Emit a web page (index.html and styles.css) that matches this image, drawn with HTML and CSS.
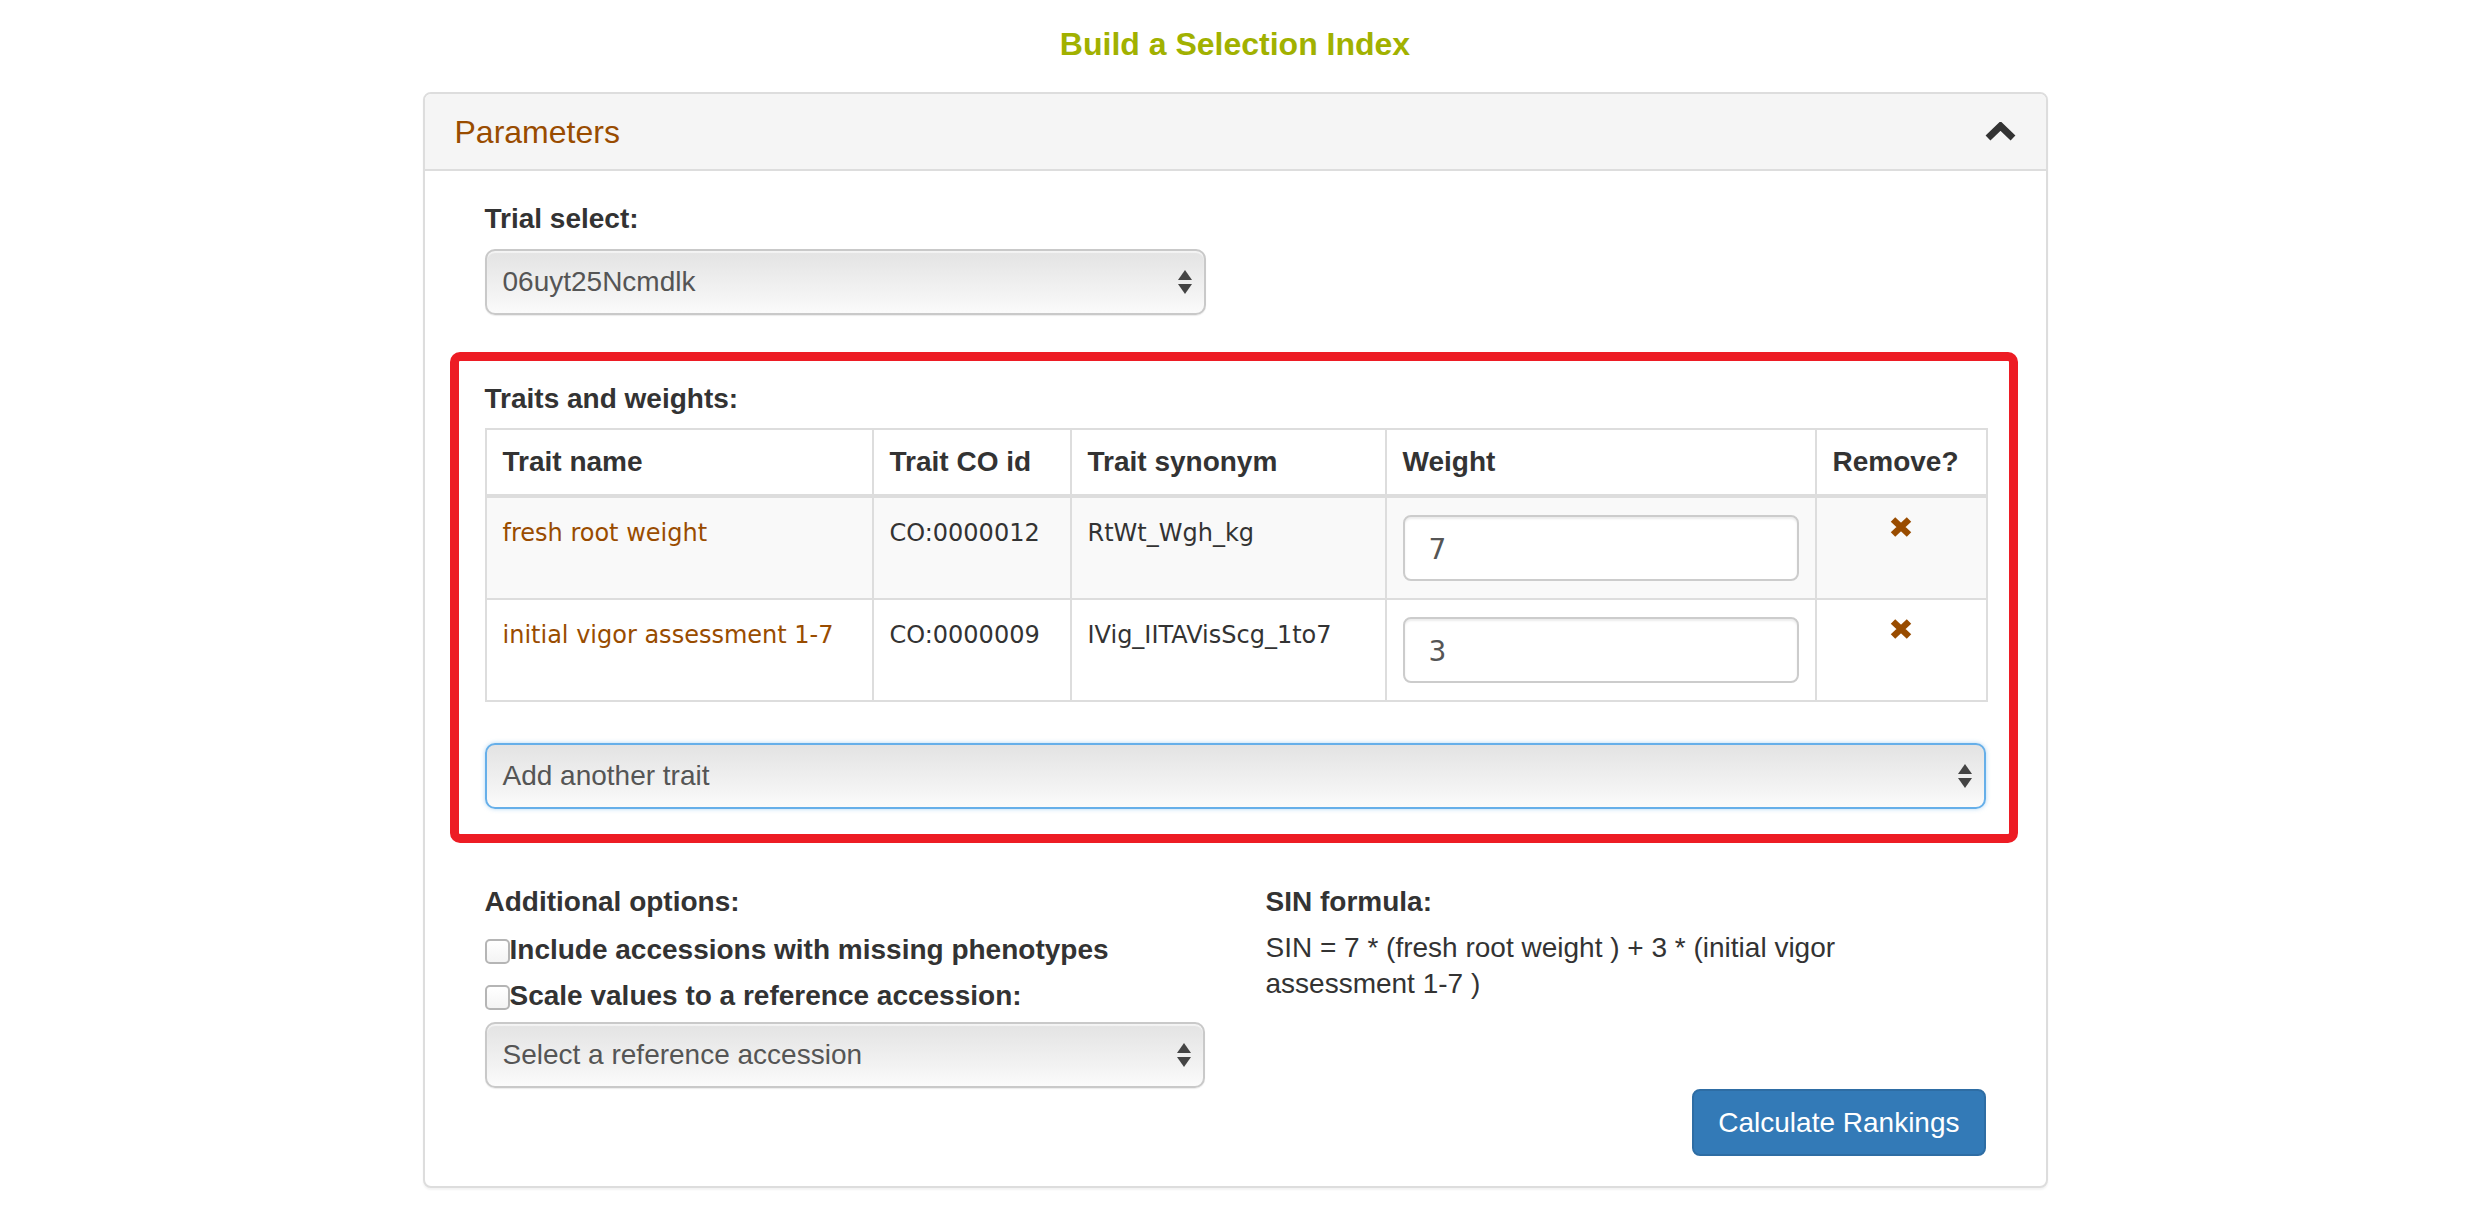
FILE: index.html
```html
<!DOCTYPE html>
<html lang="en">
<head>
<meta charset="utf-8">
<title>Build a Selection Index</title>
<link rel="stylesheet" href="styles.css">
</head>
<body>
<div class="page">
  <h1 class="title">Build a Selection Index</h1>
  <div class="panel">
    <div class="panel-heading">
      <span class="panel-title">Parameters</span>
      <svg class="chevron" width="31" height="19" viewBox="0 0 31 19"><polyline points="3,16 15.5,4 28,16" fill="none" stroke="#333" stroke-width="7"/></svg>
    </div>
    <div class="panel-body">
      <div class="trial">
        <div class="field-label">Trial select:</div>
        <div class="select">
          <span>06uyt25Ncmdlk</span>
          <svg class="arrows" width="14" height="25" viewBox="0 0 14 25"><polygon points="7,0 14,10 0,10" fill="#444"/><polygon points="0,14 14,14 7,24" fill="#444"/></svg>
        </div>
      </div>

      <div class="highlight">
        <div class="field-label">Traits and weights:</div>
        <table class="traits">
          <colgroup>
            <col class="c1"><col class="c2"><col class="c3"><col class="c4"><col class="c5">
          </colgroup>
          <thead>
            <tr><th>Trait name</th><th>Trait CO id</th><th>Trait synonym</th><th>Weight</th><th>Remove?</th></tr>
          </thead>
          <tbody>
            <tr class="odd">
              <td class="trait">fresh root weight</td>
              <td>CO:0000012</td>
              <td>RtWt_Wgh_kg</td>
              <td><div class="input">7</div></td>
              <td class="remove"><svg class="x" width="22" height="20" viewBox="0 0 22 20"><path d="M3 2.5 L19 17.5 M19 2.5 L3 17.5" stroke="#994c00" stroke-width="6.5"/></svg></td>
            </tr>
            <tr>
              <td class="trait">initial vigor assessment 1-7</td>
              <td>CO:0000009</td>
              <td>IVig_IITAVisScg_1to7</td>
              <td><div class="input">3</div></td>
              <td class="remove"><svg class="x" width="22" height="20" viewBox="0 0 22 20"><path d="M3 2.5 L19 17.5 M19 2.5 L3 17.5" stroke="#994c00" stroke-width="6.5"/></svg></td>
            </tr>
          </tbody>
        </table>
        <div class="select focus">
          <span>Add another trait</span>
          <svg class="arrows" width="14" height="25" viewBox="0 0 14 25"><polygon points="7,0 14,10 0,10" fill="#444"/><polygon points="0,14 14,14 7,24" fill="#444"/></svg>
        </div>
      </div>

      <div class="options-row">
        <div class="col">
          <div class="field-label">Additional options:</div>
          <label class="check"><span class="box"></span>Include accessions with missing phenotypes</label>
          <label class="check"><span class="box"></span>Scale values to a reference accession:</label>
          <div class="select ref">
            <span>Select a reference accession</span>
            <svg class="arrows" width="14" height="25" viewBox="0 0 14 25"><polygon points="7,0 14,10 0,10" fill="#444"/><polygon points="0,14 14,14 7,24" fill="#444"/></svg>
          </div>
        </div>
        <div class="col">
          <div class="field-label">SIN formula:</div>
          <p class="formula">SIN = 7 * (fresh root weight ) + 3 * (initial vigor assessment 1-7 )</p>
        </div>
      </div>

      <div class="actions">
        <button class="btn" type="button">Calculate Rankings</button>
      </div>
    </div>
  </div>
</div>
</body>
</html>
```

FILE: styles.css
```css
* { box-sizing: border-box; }

html, body {
  margin: 0;
  padding: 0;
  background: #fff;
}

body {
  font-family: "Liberation Sans", Arial, Helvetica, sans-serif;
  font-size: 28px;
  line-height: 40px;
  color: #333;
}

.page {
  width: 2470px;
}

.title {
  margin: 22px 0 26px;
  font-size: 32px;
  line-height: 44px;
  font-weight: bold;
  text-align: center;
  color: #a1b100;
}

.panel {
  width: 1625px;
  margin: 0 auto 20px;
  border: 2px solid #ddd;
  border-radius: 8px;
  box-shadow: 0 2px 2px rgba(0, 0, 0, 0.05);
  background: #fff;
}

.panel-heading {
  display: flex;
  justify-content: space-between;
  align-items: center;
  height: 77px;
  padding: 0 30px;
  background: #f5f5f5;
  border-bottom: 2px solid #ddd;
  border-radius: 6px 6px 0 0;
}

.panel-title {
  font-size: 32px;
  line-height: 36px;
  color: #994c00;
}

.chevron { display: block; }

.panel-body {
  padding: 28px 60px 30px;
}

.field-label {
  font-weight: bold;
  line-height: 40px;
  margin-bottom: 10px;
}

.trial {
  width: 721px;
  margin-bottom: 37px;
}

.select {
  display: flex;
  align-items: center;
  justify-content: space-between;
  height: 66px;
  padding: 0 12px 0 16px;
  border: 2px solid #c9c9c9;
  border-radius: 10px;
  background: linear-gradient(#e3e3e3, #f3f3f3 70%, #fbfbfb);
  box-shadow: inset 0 2px 1px rgba(255,255,255,0.6), 0 1px 1px rgba(0,0,0,0.08);
  color: #555;
  font-size: 28px;
}

.arrows { display: block; flex: none; }

.select.focus {
  border-color: #66afe9;
  box-shadow: 0 0 4px rgba(102, 175, 233, 0.5);
}

.highlight {
  margin: 0 -32px 0 -35px;
  padding: 18px 23px 25px 26px;
  border: 9px solid #ed1c24;
  border-radius: 10px;
}

.highlight .field-label {
  margin-bottom: 9px;
}

.traits {
  width: 100%;
  border-collapse: collapse;
  border: 2px solid #ddd;
  margin-bottom: 41px;
  table-layout: fixed;
}

.c1 { width: 387px; }
.c2 { width: 198px; }
.c3 { width: 315px; }
.c4 { width: 430px; }
.c5 { width: 171px; }

.traits th {
  text-align: left;
  font-weight: bold;
  padding: 14px 16px 14px;
  line-height: 36px;
  border: 2px solid #ddd;
  border-bottom-width: 4px;
  vertical-align: bottom;
}

.traits td {
  font-family: "DejaVu Sans", Verdana, sans-serif;
  font-size: 24px;
  line-height: 36px;
  padding: 17px 16px 17px;
  border: 2px solid #ddd;
  vertical-align: top;
  color: #333;
  white-space: nowrap;
}

.traits tr.odd td { background: #f9f9f9; }

.traits td.trait { color: #994c00; }

.traits td.remove { text-align: center; }

.x { display: block; margin: 2px auto 0; }

.input {
  height: 66px;
  width: 100%;
  padding: 0 24px;
  border: 2px solid #ccc;
  border-radius: 8px;
  background: #fff;
  box-shadow: inset 0 2px 2px rgba(0, 0, 0, 0.075);
  font-family: "DejaVu Sans", Verdana, sans-serif;
  font-size: 28px;
  line-height: 66px;
  color: #555;
}

.options-row {
  display: grid;
  grid-template-columns: 720px 720px;
  column-gap: 61px;
  margin-top: 39px;
}

.options-row .field-label { margin-bottom: 8px; }

.check {
  display: flex;
  align-items: center;
  font-weight: bold;
  line-height: 40px;
  margin-bottom: 6px;
}

.box {
  display: block;
  width: 25px;
  height: 25px;
  border: 2px solid #b5b5b5;
  border-radius: 5px;
  background: linear-gradient(#fff, #f4f4f4);
  margin-top: 2px;
  flex: none;
}

.select.ref { margin-top: 5px; }

.formula {
  margin: 7px 0 0;
  line-height: 36px;
  padding-right: 150px;
}

.actions {
  display: flex;
  justify-content: flex-end;
  margin-top: 1px;
}

.btn {
  font-family: "Liberation Sans", Arial, Helvetica, sans-serif;
  font-size: 28px;
  line-height: 40px;
  padding: 12px 24px;
  height: 67px;
  color: #fff;
  background: #337ab7;
  border: 2px solid #2e6da4;
  border-radius: 8px;
}
```
